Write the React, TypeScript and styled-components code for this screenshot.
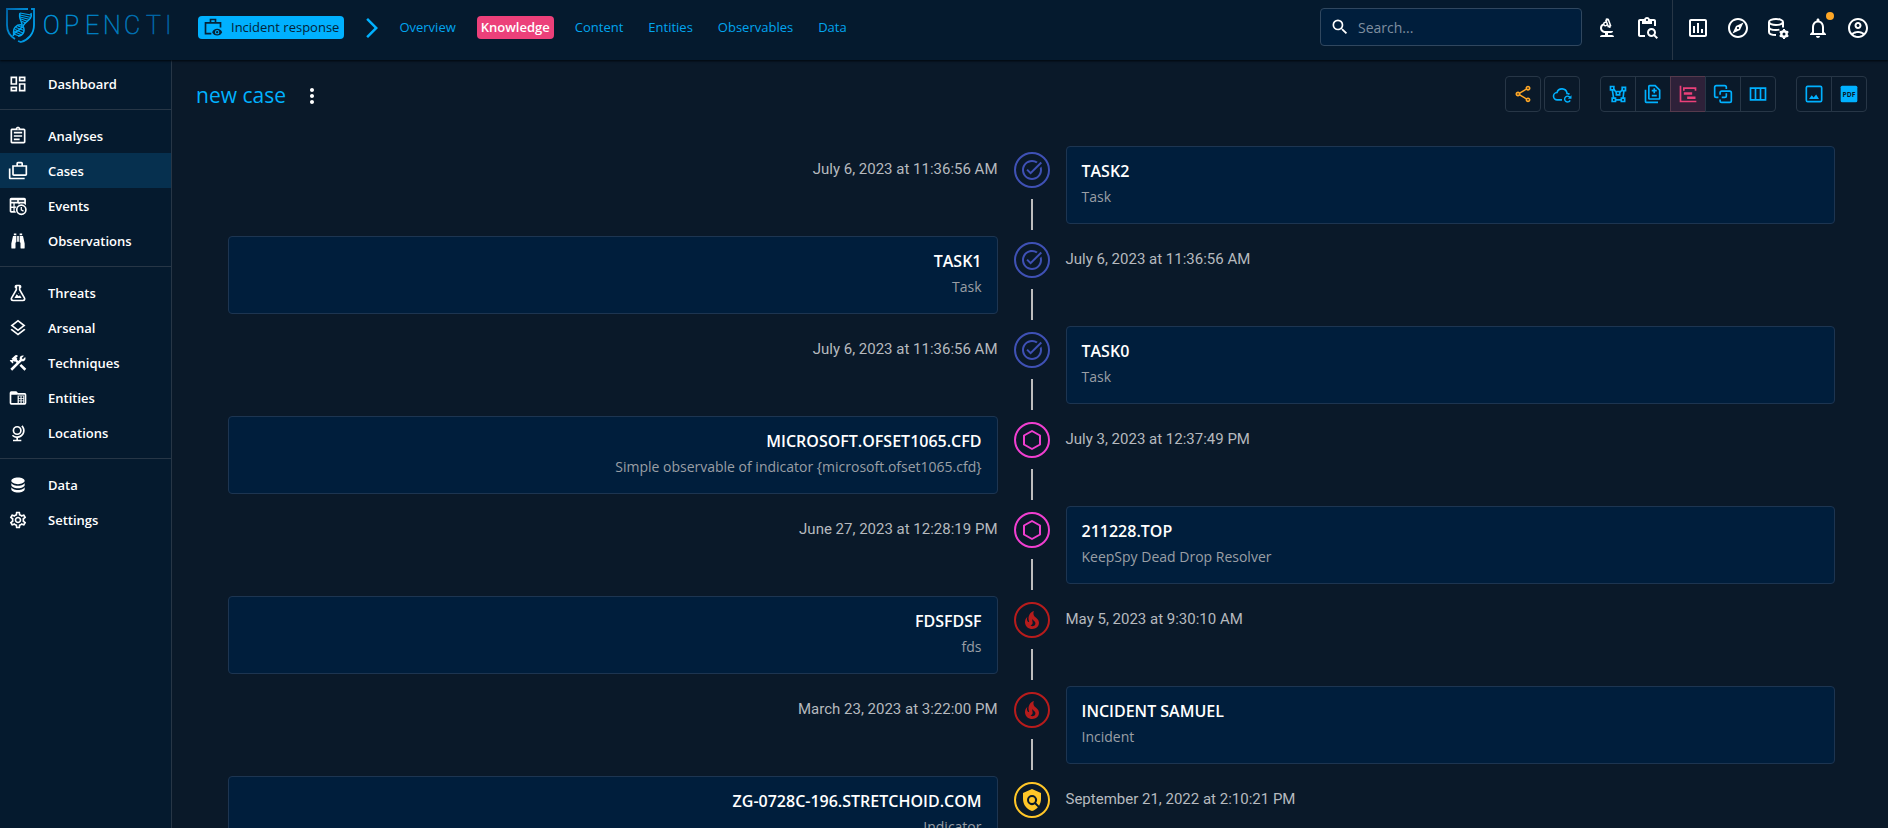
import React from "react";
import styled, { createGlobalStyle, css } from "styled-components";
import {
  MdArrowForwardIos,
  MdConstruction,
  MdMoreVert,
  MdNotificationsNone,
  MdOutlineAccountCircle,
  MdOutlineAssignment,
  MdOutlineBiotech,
  MdOutlineCases,
  MdOutlineContentPasteSearch,
  MdOutlineDashboard,
  MdOutlineDifference,
  MdOutlineExplore,
  MdOutlineInsertChart,
  MdOutlineLayers,
  MdOutlineSettings,
  MdOutlineShare,
  MdPolicy,
  MdSearch,
  MdTaskAlt,
} from "react-icons/md";

const color = {
  page: "#0a1929",
  bar: "#051a2e",
  paper: "#001e3c",
  selected: "#06304f",
  primary: "#00b1ff",
  secondary: "#ec407a",
  warning: "#ffa726",
  divider: "#273646",
  cardBorder: "#1d3551",
  text: "#ffffff",
  date: "#b6babf",
  muted: "#9a9fa5",
  task: "#3f51b5",
  observable: "#f03fd0",
  incident: "#b71c1c",
  indicator: "#ffc628",
};

const GlobalStyle = createGlobalStyle`
  *, *::before, *::after { box-sizing: border-box; }
  body {
    margin: 0;
    background: ${color.page};
    color: ${color.text};
    font-family: "Open Sans", "Noto Sans", sans-serif;
    font-size: 14px;
  }
  a { color: inherit; text-decoration: none; }
  button { font: inherit; cursor: pointer; }
`;

/* ---------- icons ---------- */

const Svg = ({ size = 24, children }: { size?: number; children: React.ReactNode }) => (
  <svg width={size} height={size} viewBox="0 0 24 24" fill="currentColor" aria-hidden="true">
    {children}
  </svg>
);

type IconProps = { size?: number };

const TableClockIcon = ({ size }: IconProps) => (
  <Svg size={size}>
    <path d="M4 2C2.9 2 2 2.9 2 4V18C2 19.1 2.9 20 4 20H9.5A8 8 0 0 1 8.7 18H8V14.8H8.9A7.5 7.5 0 0 1 10.2 12.5H8V9H12.5V10.3A7.5 7.5 0 0 1 14.2 9.2V9H19.5V9.7A7.5 7.5 0 0 1 21.5 11V4C21.5 2.9 20.6 2 19.5 2ZM4 5H11V7H4ZM13 5H19.5V7H13ZM4 9H6.5V12.5H4ZM4 14.5H6.5V18H4Z" fillRule="evenodd" />
    <path d="M16 10A6.5 6.5 0 1 0 16 23A6.5 6.5 0 1 0 16 10ZM16 12A4.5 4.5 0 1 1 16 21A4.5 4.5 0 1 1 16 12Z" fillRule="evenodd" />
    <path d="M15.2 13.2H16.7V16.2L19 17.5L18.2 18.8L15.2 17Z" />
  </Svg>
);

const BinocularsIcon = ({ size }: IconProps) => (
  <Svg size={size}>
    <path d="M11,6H13V13H11V6M9,20A1,1 0 0,1 8,21H5A1,1 0 0,1 4,20V15L6,6H10V13A1,1 0 0,1 9,14V20M10,5H7V3H10V5M15,20V14A1,1 0 0,1 14,13V6H18L20,15V20A1,1 0 0,1 19,21H16A1,1 0 0,1 15,20M14,5V3H17V5H14Z" />
  </Svg>
);

const FlaskIcon = ({ size }: IconProps) => (
  <Svg size={size}>
    <path d="M5,19A1,1 0 0,0 6,20H18A1,1 0 0,0 19,19C19,18.79 18.93,18.59 18.82,18.43L13,8.35V4H11V8.35L5.18,18.43C5.07,18.59 5,18.79 5,19M6,22A3,3 0 0,1 3,19C3,18.4 3.18,17.84 3.5,17.37L9,7.81V6A1,1 0 0,1 8,5V4A2,2 0 0,1 10,2H14A2,2 0 0,1 16,4V5A1,1 0 0,1 15,6V7.81L20.5,17.37C20.82,17.84 21,18.4 21,19A3,3 0 0,1 18,22H6M13,16L14.34,14.66L16.27,18H7.73L10.39,13.39L13,16M12.5,12A0.5,0.5 0 0,1 13,12.5A0.5,0.5 0 0,1 12.5,13A0.5,0.5 0 0,1 12,12.5A0.5,0.5 0 0,1 12.5,12Z" />
  </Svg>
);

const FolderTableIcon = ({ size }: IconProps) => (
  <Svg size={size}>
    <path fillRule="evenodd" d="M4 4H10L12 6H20A2 2 0 0 1 22 8V18A2 2 0 0 1 20 20H4A2 2 0 0 1 2 18V6A2 2 0 0 1 4 4ZM4 8V18H11.5V8Z" />
    <path fill={color.bar} d="M13 10H15V12H13ZM16.3 10H18.3V12H16.3ZM13 13H15V15H13ZM16.3 13H18.3V15H16.3ZM13 16H15V18H13ZM16.3 16H18.3V18H16.3ZM11 8H20V9H11ZM19.4 9H20V18H19.4Z" />
  </Svg>
);

const GlobeModelIcon = ({ size }: IconProps) => (
  <Svg size={size}>
    <path d="M17.36,2.64L15.95,4.06C17.26,5.37 18,7.14 18,9A7,7 0 0,1 11,16C9.15,16 7.37,15.26 6.06,13.95L4.64,15.36C6.08,16.8 7.97,17.71 10,17.93V20H6V22H16V20H12V17.94C16.55,17.43 20,13.58 20,9C20,6.62 19.05,4.33 17.36,2.64M11,3.5A5.5,5.5 0 0,0 5.5,9A5.5,5.5 0 0,0 11,14.5A5.5,5.5 0 0,0 16.5,9A5.5,5.5 0 0,0 11,3.5M11,5.5C12.94,5.5 14.5,7.07 14.5,9A3.5,3.5 0 0,1 11,12.5A3.5,3.5 0 0,1 7.5,9A3.5,3.5 0 0,1 11,5.5Z" />
  </Svg>
);

const DatabaseIcon = ({ size }: IconProps) => (
  <Svg size={size}>
    <path d="M12,3C7.58,3 4,4.79 4,7C4,9.21 7.58,11 12,11C16.42,11 20,9.21 20,7C20,4.79 16.42,3 12,3M4,9V12C4,14.21 7.58,16 12,16C16.42,16 20,14.21 20,12V9C20,11.21 16.42,13 12,13C7.58,13 4,11.21 4,9M4,14V17C4,19.21 7.58,21 12,21C16.42,21 20,19.21 20,17V14C20,16.21 16.42,18 12,18C7.58,18 4,16.21 4,14Z" />
  </Svg>
);

const Gear = ({ cx, cy }: { cx: number; cy: number }) => (
  <g fill="none" stroke="currentColor" transform={`translate(${cx} ${cy})`}>
    <circle r="2.7" strokeWidth="2.4" />
    <path strokeWidth="2" d="M0-3.4V-5M0 3.4V5M2.9-1.7L4.3-2.5M-2.9 1.7L-4.3 2.5M2.9 1.7L4.3 2.5M-2.9-1.7L-4.3-2.5" />
  </g>
);

const DatabaseCogIcon = ({ size }: IconProps) => (
  <Svg size={size}>
    <g fill="none" stroke="currentColor" strokeWidth="2">
      <ellipse cx="10" cy="6" rx="7" ry="3" />
      <path d="M3 6V16C3 17.8 6 19 10 19M17 6V11.5M3 11C3 12.8 6 14 10 14Q12 14 13.4 13.6" />
    </g>
    <Gear cx={18} cy={18} />
  </Svg>
);

const BriefcaseEyeIcon = ({ size }: IconProps) => (
  <Svg size={size}>
    <path fill="none" stroke="currentColor" strokeWidth="2" d="M9 7V3H15V7M10 20H3V7H21V12.5" />
    <path fillRule="evenodd" d="M17 14.2C14.2 14.2 11.9 15.8 11 18.2C11.9 20.6 14.2 22.2 17 22.2S22.1 20.6 23 18.2C22.1 15.8 19.8 14.2 17 14.2ZM17 15.6A2.6 2.6 0 1 1 17 20.8A2.6 2.6 0 1 1 17 15.6ZM17 16.8A1.4 1.4 0 1 0 17 19.6A1.4 1.4 0 1 0 17 16.8Z" />
  </Svg>
);

const CloudRefreshIcon = ({ size }: IconProps) => (
  <Svg size={size}>
    <path fill="none" stroke="currentColor" strokeWidth="1.9" d="M12 19H6.4A4.4 4.4 0 0 1 6 10.2A6.2 6.2 0 0 1 18 10.8V11.3Q19.8 11.4 21 12.5" />
    <path fill="none" stroke="currentColor" strokeWidth="1.7" d="M21.6 16.2A3.5 3.5 0 1 0 21.8 19.6" />
    <path d="M23.4 13.4V17.8H19Z" />
  </Svg>
);

const PolygonIcon = ({ size }: IconProps) => (
  <Svg size={size}>
    <path d="M2,2V8H4.28L5.57,16H4V22H10V20.06L15,20.05V22H21V16H19.17L20,9H22V3H16V6.53L14.8,8H9.59L8,5.82V2M4,4H6V6H4M18,5H20V7H18M6.31,8H7.11L9,10.59V14H15V10.91L16.57,9H18L17.16,16H15V18.06H10V16H7.6M11,10H13V12H11M6,18H8V20H6M17,18H19V20H17" />
  </Svg>
);

const ChartTimelineIcon = ({ size }: IconProps) => (
  <Svg size={size}>
    <path d="M2,2H4V20H22V22H2V2M7,10H17V13H7V10M11,15H21V18H11V15M6,4H22V8H20V6H8V8H6V4Z" />
  </Svg>
);

const CorrelationIcon = ({ size }: IconProps) => (
  <Svg size={size}>
    <path fill="none" stroke="currentColor" strokeWidth="2" d="M6.5 16H4Q2 16 2 14V4Q2 2 4 2H14Q16 2 16 4V6M16 11V14Q16 16 14 16H10.5M8.500 13V10.500Q8.500 8.500 10.500 8.500H20Q22 8.500 22 10.500V20Q22 22 20 22H10.500Q8.500 22 8.500 20V18.500" />
  </Svg>
);

const ColumnsIcon = ({ size }: IconProps) => (
  <Svg size={size}>
    <path fill="none" stroke="currentColor" strokeWidth="2" d="M3 5H21V19H3ZM9 5V19M15 5V19" />
  </Svg>
);

const ImageIcon = ({ size }: IconProps) => (
  <Svg size={size}>
    <rect x="2.8" y="2.8" width="18.4" height="18.4" rx="1.6" fill="none" stroke="currentColor" strokeWidth="2" />
    <path d="M6 18L9.3 13.6L11.5 16.2L14.6 12.6L18 18Z" />
  </Svg>
);

const PdfIcon = ({ size }: IconProps) => (
  <Svg size={size}>
    <rect x="2" y="2" width="20" height="20" rx="2" />
    <text x="12" y="15" textAnchor="middle" fontSize="8" fontWeight="700" fill={color.page}>PDF</text>
  </Svg>
);

const HexagonIcon = ({ size }: IconProps) => (
  <Svg size={size}>
    <path fill="none" stroke="currentColor" strokeWidth="2" strokeLinejoin="round" d="M12 3L20 7.5V16.5L12 21L4 16.5V7.5Z" />
  </Svg>
);

const FireIcon = ({ size }: IconProps) => (
  <Svg size={size}>
    <path d="M17.66 11.2C17.43 10.9 17.15 10.64 16.89 10.38C16.22 9.78 15.46 9.35 14.82 8.72C13.33 7.26 13 4.85 13.95 3C13 3.23 12.17 3.75 11.46 4.32C8.87 6.4 7.85 10.07 9.07 13.22C9.11 13.32 9.15 13.42 9.15 13.55C9.15 13.77 9 13.97 8.8 14.05C8.57 14.15 8.33 14.09 8.14 13.93C8.08 13.88 8.04 13.83 8 13.76C6.87 12.33 6.69 10.28 7.45 8.64C5.78 10 4.87 12.3 5 14.47C5.06 14.97 5.12 15.47 5.29 15.97C5.43 16.57 5.7 17.17 6 17.7C7.08 19.43 8.95 20.67 10.96 20.92C13.1 21.19 15.39 20.8 17.03 19.32C18.86 17.66 19.5 15 18.56 12.72L18.43 12.46C18.22 12 17.66 11.2 17.66 11.2M14.5 17.5C14.22 17.74 13.76 18 13.4 18.1C12.28 18.5 11.16 17.94 10.5 17.28C11.69 17 12.4 16.12 12.61 15.23C12.78 14.43 12.46 13.77 12.33 13C12.21 12.26 12.23 11.63 12.5 10.94C12.69 11.32 12.89 11.7 13.13 12C13.9 13 15.11 13.44 15.37 14.8C15.41 14.94 15.43 15.08 15.43 15.23C15.46 16.05 15.1 16.95 14.5 17.5H14.5Z" />
  </Svg>
);

const Logo = () => (
  <svg width="180" height="48" viewBox="0 0 180 48" role="img" aria-label="OpenCTI">
    <defs>
      <linearGradient id="word" gradientUnits="userSpaceOnUse" x1="38" y1="0" x2="164" y2="0">
        <stop offset="0" stopColor="#0095dc" />
        <stop offset="1" stopColor="#00609f" />
      </linearGradient>
      <linearGradient id="shield" x1="0" y1="0" x2="1" y2="1">
        <stop offset="0" stopColor="#0067ab" />
        <stop offset="1" stopColor="#00b1ff" />
      </linearGradient>
    </defs>
    <g fill="none" stroke="url(#shield)" strokeWidth="1.8">
      <path d="M22 3H1V19C1 26 4 30 9 33" />
      <path d="M25 3H28V19C28 28 22 34 15 36L12 35" />
    </g>
    <g fill="none" stroke="#00a4ee" strokeWidth="1.5">
      <path d="M14 7C12 13 17 16 16 20C15 26 9 23 7 30" />
      <path d="M25 7C27 14 19 15 17 20C20 26 16 30 12 30" />
      <path d="M16 19C11 18 6 22 8 29" />
      <path strokeWidth="1.1" d="M14 7L25 9M14 9L25 11.5M14 11L24 13.5M15 13L22 15.5M16 15.5L20 17M12 20L18 22M10 21.5L18 24.5M9 23.5L17 27M8 25.5L16 29M8 28L13 30" />
    </g>
    <text x="37 58 79 97 118 140 159" y="28" fontFamily="Roboto" fontWeight="100" fontSize="25" fill="url(#word)" stroke="url(#word)" strokeWidth="0.6">
      OPENCTI
    </text>
  </svg>
);

/* ---------- shell ---------- */

const Shell = styled.div`
  display: flex;
  flex-direction: column;
  height: 100vh;
`;

const Header = styled.header`
  display: flex;
  align-items: stretch;
  flex: none;
  height: 60px;
  background: ${color.bar};
  box-shadow: 0 1px 2px #01060c;
  z-index: 1;
`;

const LogoLink = styled.a`
  width: 198px;
  padding: 6px 0 0 6px;
`;

const Crumbs = styled.nav`
  display: flex;
  align-items: flex-start;
  padding-top: 16px;
`;

const chip = css`
  display: flex;
  align-items: center;
  height: 23px;
  border-radius: 4px;
  font-size: 13px;
  line-height: 20px;
`;

const CaseChip = styled.a`
  ${chip}
  gap: 8px;
  padding: 0 5px 2px;
  background: ${color.primary};
  && { color: #042338; }
  font-weight: 500;
`;

const Chevron = styled.span`
  display: flex;
  margin: 0 11px 0 16px;
  color: ${color.primary};
`;

const Tabs = styled.div`
  display: flex;
  gap: 17px;
`;

const Tab = styled.a<{ $active?: boolean }>`
  ${chip}
  padding: 0 4px 2px;
  && { color: ${(p) => (p.$active ? "#fff" : "#02a5ee")}; }
  background: ${(p) => (p.$active ? color.secondary : "transparent")};
  font-weight: ${(p) => (p.$active ? 600 : 500)};
`;

const SearchBox = styled.label`
  display: flex;
  align-items: center;
  gap: 8px;
  width: 262px;
  height: 38px;
  margin: 8px 5px 0 auto;
  padding: 0 9px;
  border: 1px solid #30475f;
  border-radius: 4px;
  background: ${color.paper};
`;

const SearchInput = styled.input`
  flex: 1;
  min-width: 0;
  border: 0;
  outline: 0;
  padding: 0;
  background: transparent;
  color: #fff;
  font: 14px "Open Sans", sans-serif;
  &::placeholder { color: #7f8ea0; opacity: 1; }
`;

const ActionGroup = styled.div<{ $divided?: boolean }>`
  display: flex;
  align-items: flex-start;
  padding: 8px ${(p) => (p.$divided ? "10px 0 5px" : "5px 0 0")};
  border-left: ${(p) => (p.$divided ? `1px solid ${color.divider}` : "0")};
`;

const IconButton = styled.button`
  position: relative;
  display: grid;
  place-items: center;
  width: 40px;
  height: 40px;
  padding: 0;
  border: 0;
  background: none;
  color: #fff;
`;

const Badge = styled.span`
  position: absolute;
  top: 4px;
  right: 4px;
  width: 8px;
  height: 8px;
  border-radius: 4px;
  background: ${color.warning};
`;

const Body = styled.div`
  display: flex;
  flex: 1;
  min-height: 0;
`;

const Sidebar = styled.nav`
  flex: none;
  width: 172px;
  padding-top: 6px;
  border-right: 1px solid ${color.divider};
  background: ${color.bar};
`;

const NavGroup = styled.ul`
  margin: 0;
  padding: 0 0 8px;
  list-style: none;
  & + & {
    padding-top: 8px;
    border-top: 1px solid ${color.divider};
  }
`;

const NavLink = styled.a<{ $active?: boolean }>`
  display: flex;
  align-items: center;
  gap: 20px;
  height: 35px;
  padding-left: 8px;
  background: ${(p) => (p.$active ? color.selected : "transparent")};
  font-size: 13px;
  font-weight: 600;
`;

const Main = styled.main`
  flex: 1;
  min-width: 0;
  padding: 16px 21px 0 24px;
  overflow-y: auto;
  scrollbar-width: none;
`;

/* ---------- title and toolbar ---------- */

const TitleBar = styled.div`
  display: flex;
  align-items: flex-start;
  height: 40px;
`;

const Title = styled.h1`
  margin: 0 8px 0 0;
  color: ${color.primary};
  font-size: 21px;
  font-weight: 400;
  line-height: 38px;
`;

const MoreButton = styled(IconButton)`
  width: 36px;
  height: 40px;
`;

const Toolbar = styled.div`
  display: flex;
  gap: 20px;
  margin-left: auto;
`;

const ToolSet = styled.div`
  display: flex;
  gap: 3px;
`;

const ToolGroup = styled.div`
  display: flex;
  & > button:not(:first-child) {
    margin-left: -1px;
    border-top-left-radius: 0;
    border-bottom-left-radius: 0;
  }
  & > button:not(:last-child) {
    border-top-right-radius: 0;
    border-bottom-right-radius: 0;
  }
`;

const ToolButton = styled.button<{ $tone?: "warning" | "active" }>`
  display: grid;
  place-items: center;
  width: 36px;
  height: 36px;
  padding: 0;
  border: 1px solid ${(p) => (p.$tone === "active" ? "#553a4c" : color.divider)};
  border-radius: 4px;
  background: ${(p) => (p.$tone === "active" ? "#2e2139" : "transparent")};
  color: ${(p) =>
    p.$tone === "active" ? color.secondary : p.$tone === "warning" ? color.warning : color.primary};
`;

/* ---------- timeline ---------- */

const Timeline = styled.ol`
  margin: 24px 0 0;
  padding: 0 16px;
  list-style: none;
`;

const Row = styled.li<{ $flip?: boolean }>`
  display: flex;
  flex-direction: ${(p) => (p.$flip ? "row-reverse" : "row")};
  text-align: ${(p) => (p.$flip ? "right" : "left")};
  height: 90px;
`;

const When = styled.time<{ $flip?: boolean }>`
  flex: 1;
  padding: 18px 16px 0;
  color: ${color.date};
  font-family: Roboto, sans-serif;
  font-size: 15px;
  line-height: 22px;
  text-align: ${(p) => (p.$flip ? "left" : "right")};
`;

const Separator = styled.div`
  display: flex;
  flex-direction: column;
  align-items: center;
  flex: none;
  width: 36px;
`;

const Dot = styled.span<{ $color: string }>`
  display: grid;
  place-items: center;
  width: 36px;
  height: 36px;
  margin: 12px 0 11px;
  border: 2px solid ${(p) => p.$color};
  border-radius: 18px;
  color: ${(p) => p.$color};
`;

const Connector = styled.span`
  flex: 1;
  width: 2px;
  background: #bdbdbd;
`;

const CardCell = styled.div`
  flex: 1;
  padding: 6px 16px;
`;

const Card = styled.article`
  height: 78px;
  padding: 13px 15px;
  border: 1px solid ${color.cardBorder};
  border-radius: 4px;
  background: ${color.paper};
`;

const CardTitle = styled.h2`
  margin: 0 0 4px;
  font-size: 16px;
  font-weight: 600;
  line-height: 22px;
  text-transform: uppercase;
`;

const CardText = styled.p`
  margin: 0;
  color: ${color.muted};
  font-size: 14px;
  line-height: 22px;
`;

/* ---------- data ---------- */

type Icon = (props: IconProps) => React.ReactNode;

const navGroups: { label: string; icon: Icon; active?: boolean }[][] = [
  [{ label: "Dashboard", icon: MdOutlineDashboard }],
  [
    { label: "Analyses", icon: MdOutlineAssignment },
    { label: "Cases", icon: MdOutlineCases, active: true },
    { label: "Events", icon: TableClockIcon },
    { label: "Observations", icon: BinocularsIcon },
  ],
  [
    { label: "Threats", icon: FlaskIcon },
    { label: "Arsenal", icon: MdOutlineLayers },
    { label: "Techniques", icon: MdConstruction },
    { label: "Entities", icon: FolderTableIcon },
    { label: "Locations", icon: GlobeModelIcon },
  ],
  [
    { label: "Data", icon: DatabaseIcon },
    { label: "Settings", icon: MdOutlineSettings },
  ],
];

const tabs = ["Overview", "Knowledge", "Content", "Entities", "Observables", "Data"];

type Kind = "task" | "observable" | "incident" | "indicator";

const kindIcon: Record<Kind, Icon> = {
  task: MdTaskAlt,
  observable: HexagonIcon,
  incident: FireIcon,
  indicator: MdPolicy,
};

const events: { date: string; title: string; text: string; kind: Kind }[] = [
  { date: "July 6, 2023 at 11:36:56 AM", title: "Task2", text: "Task", kind: "task" },
  { date: "July 6, 2023 at 11:36:56 AM", title: "Task1", text: "Task", kind: "task" },
  { date: "July 6, 2023 at 11:36:56 AM", title: "Task0", text: "Task", kind: "task" },
  {
    date: "July 3, 2023 at 12:37:49 PM",
    title: "microsoft.ofset1065.cfd",
    text: "Simple observable of indicator {microsoft.ofset1065.cfd}",
    kind: "observable",
  },
  { date: "June 27, 2023 at 12:28:19 PM", title: "211228.top", text: "KeepSpy Dead Drop Resolver", kind: "observable" },
  { date: "May 5, 2023 at 9:30:10 AM", title: "fdsfdsf", text: "fds", kind: "incident" },
  { date: "March 23, 2023 at 3:22:00 PM", title: "Incident Samuel", text: "Incident", kind: "incident" },
  { date: "September 21, 2022 at 2:10:21 PM", title: "zg-0728c-196.stretchoid.com", text: "Indicator", kind: "indicator" },
];

export default function App() {
  return (
    <Shell>
      <GlobalStyle />
      <Header>
        <LogoLink href="#home">
          <Logo />
        </LogoLink>
        <Crumbs aria-label="Case">
          <CaseChip href="#case">
            <BriefcaseEyeIcon size={20} />
            Incident response
          </CaseChip>
          <Chevron>
            <MdArrowForwardIos size={24} />
          </Chevron>
          <Tabs>
            {tabs.map((t) => (
              <Tab key={t} href={`#${t.toLowerCase()}`} $active={t === "Knowledge"}>
                {t}
              </Tab>
            ))}
          </Tabs>
        </Crumbs>
        <SearchBox>
          <MdSearch size={20} />
          <SearchInput type="search" placeholder="Search..." aria-label="Search" />
        </SearchBox>
        <ActionGroup>
          <IconButton aria-label="Advanced search">
            <MdOutlineBiotech size={24} />
          </IconButton>
          <IconButton aria-label="Bulk search">
            <MdOutlineContentPasteSearch size={24} />
          </IconButton>
        </ActionGroup>
        <ActionGroup $divided>
          <IconButton aria-label="Dashboards">
            <MdOutlineInsertChart size={24} />
          </IconButton>
          <IconButton aria-label="Investigations">
            <MdOutlineExplore size={24} />
          </IconButton>
          <IconButton aria-label="Data import">
            <DatabaseCogIcon size={24} />
          </IconButton>
          <IconButton aria-label="Notifications">
            <MdNotificationsNone size={24} />
            <Badge />
          </IconButton>
          <IconButton aria-label="Profile">
            <MdOutlineAccountCircle size={24} />
          </IconButton>
        </ActionGroup>
      </Header>
      <Body>
        <Sidebar aria-label="Main">
          {navGroups.map((group) => (
            <NavGroup key={group[0].label}>
              {group.map(({ label, icon: NavIcon, active }) => (
                <li key={label}>
                  <NavLink href={`#${label.toLowerCase()}`} $active={active}>
                    <NavIcon size={20} />
                    {label}
                  </NavLink>
                </li>
              ))}
            </NavGroup>
          ))}
        </Sidebar>
        <Main>
          <TitleBar>
            <Title>new case</Title>
            <MoreButton aria-label="More">
              <MdMoreVert size={24} />
            </MoreButton>
            <Toolbar>
              <ToolSet>
                <ToolButton $tone="warning" aria-label="Share">
                  <MdOutlineShare size={20} />
                </ToolButton>
                <ToolButton aria-label="Enrichment">
                  <CloudRefreshIcon size={20} />
                </ToolButton>
              </ToolSet>
              <ToolGroup>
                <ToolButton aria-label="Graph view">
                  <PolygonIcon size={20} />
                </ToolButton>
                <ToolButton aria-label="Content mapping">
                  <MdOutlineDifference size={20} />
                </ToolButton>
                <ToolButton $tone="active" aria-label="Timeline view">
                  <ChartTimelineIcon size={20} />
                </ToolButton>
                <ToolButton aria-label="Correlation view">
                  <CorrelationIcon size={20} />
                </ToolButton>
                <ToolButton aria-label="Matrix view">
                  <ColumnsIcon size={20} />
                </ToolButton>
              </ToolGroup>
              <ToolGroup>
                <ToolButton aria-label="Export as image">
                  <ImageIcon size={20} />
                </ToolButton>
                <ToolButton aria-label="Export as PDF">
                  <PdfIcon size={20} />
                </ToolButton>
              </ToolGroup>
            </Toolbar>
          </TitleBar>
          <Timeline>
            {events.map(({ date, title, text, kind }, i) => {
              const flip = i % 2 === 1;
              const KindIcon = kindIcon[kind];
              return (
                <Row key={title} $flip={flip}>
                  <When $flip={flip}>{date}</When>
                  <Separator>
                    <Dot $color={color[kind]}>
                      <KindIcon size={24} />
                    </Dot>
                    <Connector />
                  </Separator>
                  <CardCell>
                    <Card>
                      <CardTitle>{title}</CardTitle>
                      <CardText>{text}</CardText>
                    </Card>
                  </CardCell>
                </Row>
              );
            })}
          </Timeline>
        </Main>
      </Body>
    </Shell>
  );
}
